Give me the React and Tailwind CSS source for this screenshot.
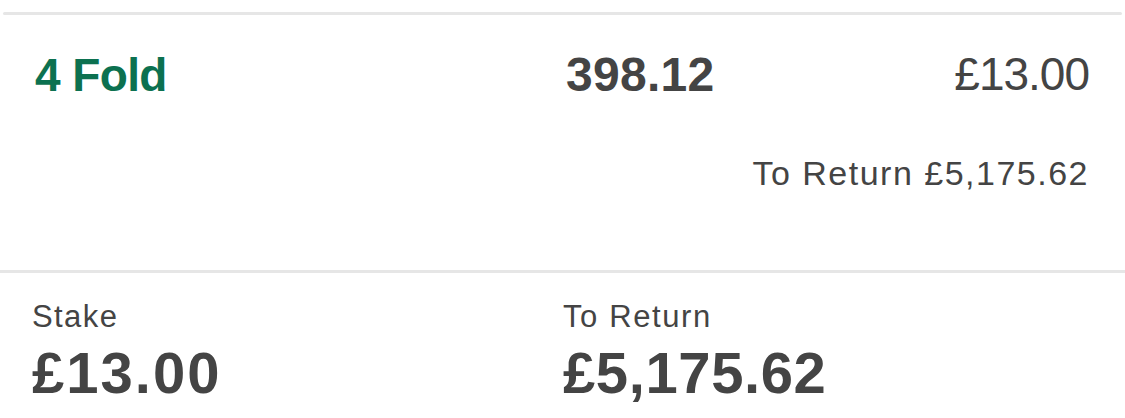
import React from 'react';

const font = { fontFamily: '"Liberation Sans", Arial, sans-serif' };

function App() {
    return (
        <div
            className="w-[1125px] h-[418px] bg-white overflow-hidden text-[#444444]"
            style={font}
        >
            {/* Card top edge */}
            <div className="pt-3">
                <div className="mx-[3px] h-[3px] rounded-full bg-[#e6e6e6]" />
            </div>

            {/* Bet line */}
            <div className="h-[255px] pt-[36px] pl-[33px] pr-[36px]">
                <div className="grid grid-cols-2 items-start">
                    <p className="mt-[1px] text-[46px] leading-none font-bold tracking-[-0.6px] text-[#0c7150] pl-[2px]">
                        4 Fold
                    </p>
                    <div className="flex items-start justify-between pl-[5px]">
                        <p className="text-[48px] leading-none font-bold tracking-[0.3px]">398.12</p>
                        <p className="text-[46px] leading-none tracking-[-1px]">£13.00</p>
                    </div>
                </div>
                <p className="mt-[57px] text-right text-[34px] leading-none tracking-[1.5px]">
                    To Return £5,175.62
                </p>
            </div>

            <div className="h-[3px] bg-[#e6e6e6]" />

            {/* Totals */}
            <div className="grid grid-cols-2 pt-[28px] pl-[32px] pr-[33px]">
                <div>
                    <p className="text-[31px] leading-none tracking-[1.4px]">Stake</p>
                    <p className="mt-[12px] text-[58px] leading-none font-bold tracking-[2px]">£13.00</p>
                </div>
                <div className="pl-[1px]">
                    <p className="text-[31px] leading-none tracking-[1.6px]">To Return</p>
                    <p className="mt-[12px] text-[58px] leading-none font-bold tracking-[0.6px]">£5,175.62</p>
                </div>
            </div>
        </div>
    );
}

export default App;
